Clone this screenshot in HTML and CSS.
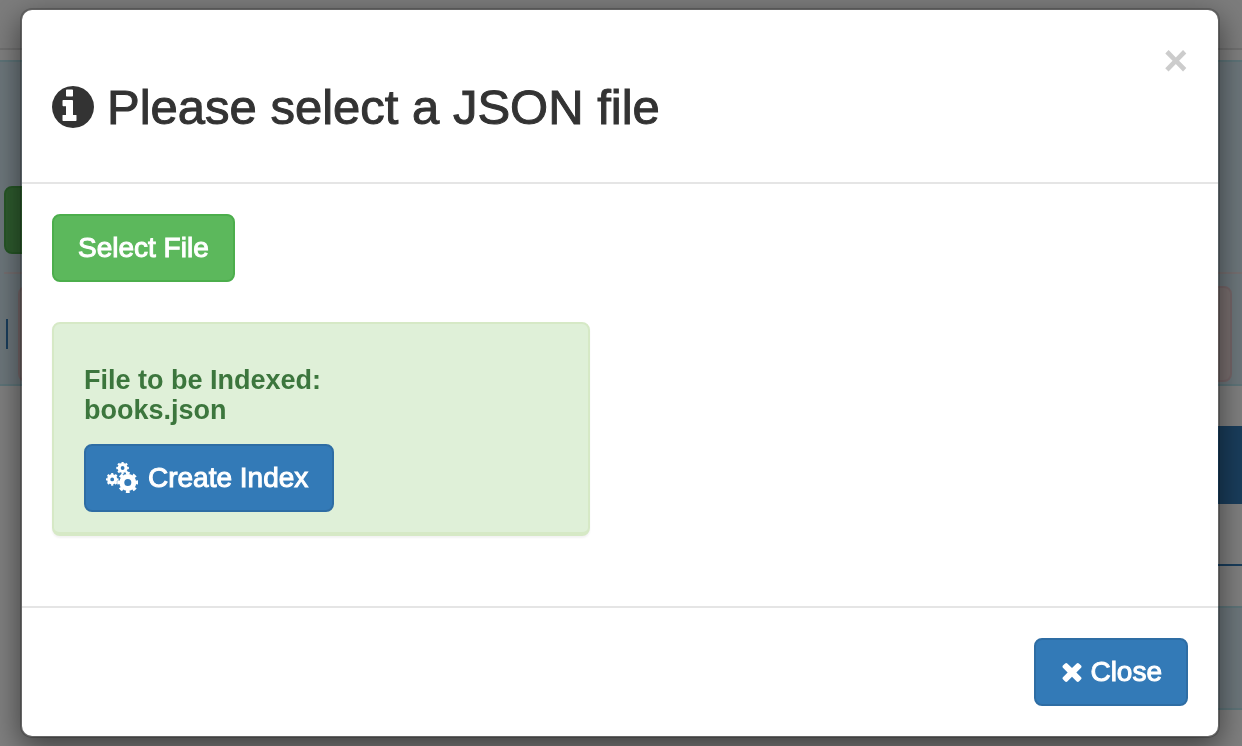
FILE: index.html
```html
<!DOCTYPE html>
<html lang="en">
<head>
<meta charset="utf-8">
<meta name="viewport" content="width=device-width, initial-scale=1">
<title>Please select a JSON file</title>
<link rel="stylesheet" href="styles.css">
</head>
<body>
<div class="page" aria-hidden="true">
  <div class="navbar"></div>
  <div class="panel panel-main">
    <div class="panel-action"></div>
    <div class="panel-row">
      <div class="cursor"></div>
      <div class="alert"></div>
    </div>
  </div>
  <div class="banner"></div>
  <div class="rule"></div>
  <div class="panel panel-lower"></div>
</div>
<div class="backdrop">
  <div class="modal" role="dialog" aria-modal="true" aria-labelledby="title">
    <header class="modal-header">
      <h3 class="modal-title" id="title">
        <svg class="icon-info" viewBox="128 128 1536 1536" aria-hidden="true"><path d="M1024 1376v-160q0-14-9-23t-23-9h-96v-512q0-14-9-23t-23-9h-320q-14 0-23 9t-9 23v160q0 14 9 23t23 9h96v320h-96q-14 0-23 9t-9 23v160q0 14 9 23t23 9h448q14 0 23-9t9-23zm-128-896v-192q0-14-9-23t-23-9h-192q-14 0-23 9t-9 23v192q0 14 9 23t23 9h192q14 0 23-9t9-23zm768 416q0 209-103 385.5t-279.5 279.5-385.5 103-385.5-103-279.5-279.5-103-385.5 103-385.5 279.5-279.5 385.5-103 385.5 103 279.5 279.5 103 385.5z"/></svg>
        <span>Please select a JSON file</span>
      </h3>
      <button class="dismiss" type="button" aria-label="Dismiss">×</button>
    </header>
    <div class="modal-body">
      <button class="btn btn-success" type="button">Select File</button>
      <section class="well">
        <h4 class="well-title">File to be Indexed:<br>books.json</h4>
        <button class="btn btn-primary btn-index" type="button">
          <svg class="icon-cogs" viewBox="0 0 32 32" aria-hidden="true">
            <g fill="none" stroke="currentColor">
              <circle cx="21.8" cy="20.4" r="6" stroke-width="5"/>
              <circle cx="21.8" cy="20.4" r="9.2" stroke-width="2.8" pathLength="32" stroke-dasharray="2.1 1.9" stroke-dashoffset="1.05"/>
              <circle cx="6.2" cy="17.4" r="3.5" stroke-width="3.2"/>
              <circle cx="6.2" cy="17.4" r="5.4" stroke-width="1.8" pathLength="32" stroke-dasharray="2.1 1.9" stroke-dashoffset="1.05"/>
              <circle cx="16.6" cy="6" r="3.5" stroke-width="3.2"/>
              <circle cx="16.6" cy="6" r="5.4" stroke-width="1.8" pathLength="32" stroke-dasharray="2.1 1.9" stroke-dashoffset="1.05"/>
            </g>
          </svg>
          <span>Create Index</span>
        </button>
      </section>
    </div>
    <footer class="modal-footer">
      <button class="btn btn-primary btn-close" type="button">
        <svg class="icon-times" viewBox="272 306 1248 1248" aria-hidden="true"><path d="M1490 1322q0 40-28 68l-136 136q-28 28-68 28t-68-28l-294-294-294 294q-28 28-68 28t-68-28l-136-136q-28-28-28-68t28-68l294-294-294-294q-28-28-28-68t28-68l136-136q28-28 68-28t68 28l294 294 294-294q28-28 68-28t68 28l136 136q28 28 28 68t-28 68l-294 294 294 294q28 28 28 68z"/></svg>
        <span>Close</span>
      </button>
    </footer>
  </div>
</div>
</body>
</html>
```
FILE: styles.css
```css
* {
  box-sizing: border-box;
}

body {
  margin: 0;
  min-height: 100vh;
  overflow: hidden;
  background: #fff;
  color: #333;
  font-family: "Liberation Sans", Arial, sans-serif;
  font-size: 28px;
  line-height: 40px;
}

svg {
  flex: none;
  fill: currentColor;
}

/* Page behind the dialog */
.page {
  height: 100vh;
  overflow: hidden;
}

.navbar {
  height: 50px;
  background: #f8f8f8;
  border-bottom: 2px solid #e0e0e0;
}

.panel {
  background: #d9edf7;
  border: 2px solid #bce8f1;
  border-width: 2px 0;
}

.panel-main {
  margin-top: 10px;
  padding-top: 124px;
}

.panel-action {
  width: 180px;
  height: 68px;
  margin-left: 4px;
  background: #5cb85c;
  border: 2px solid #4cae4c;
  border-radius: 8px;
}

.panel-row {
  display: flex;
  align-items: center;
  gap: 10px;
  margin: 18px 0 0 4px;
  padding: 12px 10px 2px 2px;
  border-top: 2px solid #ebdfe2;
}

.cursor {
  width: 2px;
  height: 30px;
  background: #337ab7;
}

.alert {
  flex: 1;
  height: 96px;
  background: #f2dede;
  border: 2px solid #ebccd1;
  border-radius: 8px;
}

.banner {
  height: 78px;
  margin: 40px 0 60px 60px;
  background: #337ab7;
}

.rule {
  height: 2px;
  margin: 0 0 40px 60px;
  background: #337ab7;
}

.panel-lower {
  height: 104px;
  margin-left: 60px;
}

/* Dialog */
.backdrop {
  position: fixed;
  inset: 0;
  padding: 8px 22px 8px 20px;
  background: rgba(0, 0, 0, 0.5);
}

.modal {
  background: #fff;
  background-clip: padding-box;
  border: 2px solid rgba(0, 0, 0, 0.2);
  border-radius: 12px;
  box-shadow: 0 10px 30px rgba(0, 0, 0, 0.5);
}

.modal-header {
  display: flex;
  justify-content: space-between;
  align-items: flex-start;
  padding: 30px;
  border-bottom: 2px solid #e5e5e5;
}

.modal-title {
  display: flex;
  align-items: center;
  gap: 13px;
  margin: 41px 0 19px;
  font-size: 49px;
  font-weight: 400;
  line-height: 52px;
  -webkit-text-stroke: 1px currentColor;
}

.icon-info {
  width: 42px;
  height: 42px;
}

.dismiss {
  padding: 0;
  border: 0;
  background: none;
  color: #ccc;
  font-family: inherit;
  font-size: 42px;
  font-weight: 700;
  line-height: 42px;
}

.modal-body {
  padding: 30px 30px 70px;
}

.btn {
  display: flex;
  align-items: center;
  gap: 8px;
  padding: 12px 24px;
  border: 2px solid;
  border-radius: 8px;
  color: #fff;
  font-family: inherit;
  font-size: 28px;
  line-height: 40px;
  -webkit-text-stroke: 1px currentColor;
}

.btn-success {
  background: #5cb85c;
  border-color: #4cae4c;
}

.btn-primary {
  background: #337ab7;
  border-color: #2e6da4;
}

.btn-index {
  gap: 10px;
  padding-left: 20px;
}

.btn-close {
  padding-left: 26px;
}

.icon-cogs {
  width: 32px;
  height: 32px;
}

.icon-times {
  width: 20px;
  height: 20px;
}

.well {
  width: calc(50% - 30px);
  min-width: 300px;
  margin-top: 40px;
  padding: 41px 30px 20px;
  background: #dff0d8;
  border: 2px solid #d6e9c6;
  border-bottom-width: 4px;
  border-radius: 8px;
  box-shadow: 0 2px 2px rgba(0, 0, 0, 0.05);
}

.well-title {
  margin: 0 0 19px;
  color: #3c763d;
  font-size: 27px;
  font-weight: 700;
  line-height: 30px;
}

.modal-footer {
  display: flex;
  justify-content: flex-end;
  padding: 30px;
  border-top: 2px solid #e5e5e5;
}
```
